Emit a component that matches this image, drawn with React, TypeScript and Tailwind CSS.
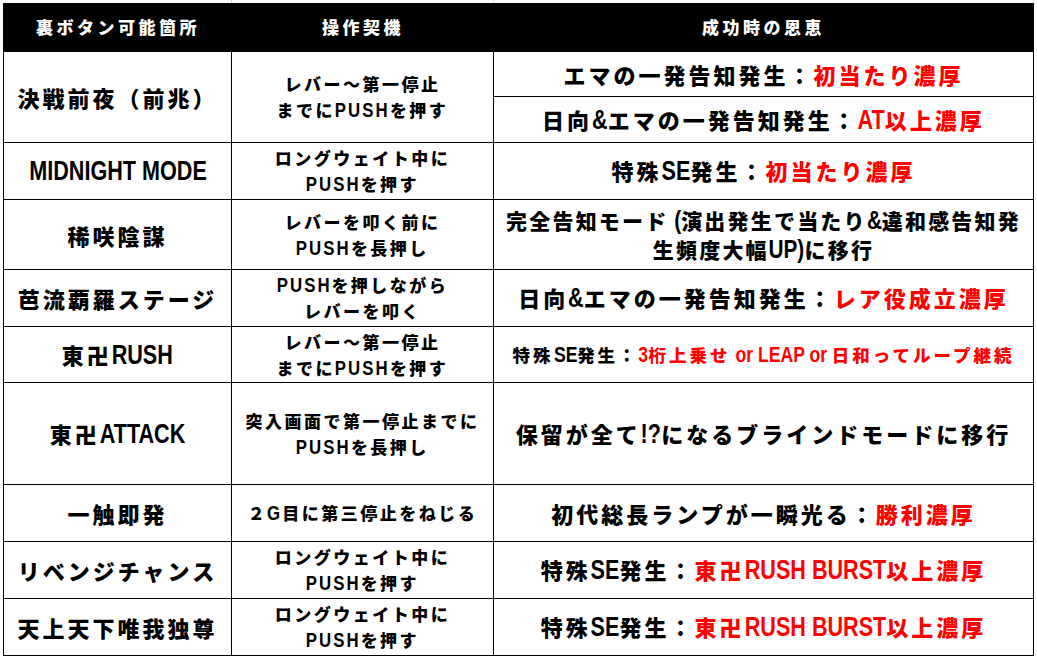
import React from "react";

function L({ children, c }: { children: React.ReactNode; c: string }) {
  return (
    <span
      className={`inline-block origin-center scale-x-[0.8] font-bold font-['Liberation_Sans','Arial',sans-serif] ${c}`}
    >
      {children}
    </span>
  );
}

function R({ children }: { children: React.ReactNode }) {
  return <span className="text-[#ff0000]">{children}</span>;
}

const cell =
  "flex flex-col items-center justify-center text-center whitespace-nowrap border-r border-b border-black text-black font-black font-['Noto_Sans_CJK_JP',sans-serif]";
const c1 = `${cell} text-[22px] tracking-[3px] leading-[28px]`;
const c2 = `${cell} text-[17px] tracking-[2.5px] leading-[26px]`;
const c3 = `${cell} text-[22px] tracking-[3px] leading-[29px]`;
const c3b = `${cell} text-[21px] tracking-[2.2px] leading-[29px]`;
const c3s = `${cell} text-[17.5px] tracking-[3px] leading-[26px]`;
const hd =
  "flex items-center justify-center bg-black text-white font-black text-[17px] tracking-[3.5px] font-['Noto_Sans_CJK_JP',sans-serif] border-b border-black";

/* column 2 latin: 21px, keeps the cell's tracking */
const PUSH = "text-[21px] -mx-[6.8px]";

export default function App() {
  return (
    <div className="w-[1037px] h-[659px] bg-white overflow-hidden">
      <div className="flex h-[3px] pl-[3px]">
        <div className="w-[229px] border-r border-[#d9d9d9]" />
        <div className="w-[262px] border-r border-[#e5e5e5]" />
        <div className="w-[540px] border-r border-[#d9d9d9]" />
      </div>
      <div className="ml-[3px] w-[1031px] grid grid-cols-[228px_262px_540px] grid-rows-[49px_45px_46px_57px_70px_57px_56px_102px_57px_57px_57px] border-l border-black">
        {/* header */}
        <div className={hd}>裏ボタン可能箇所</div>
        <div className={hd}>操作契機</div>
        <div className={`${hd} border-r`}>成功時の恩恵</div>

        {/* row 1 */}
        <div className={`${c1} row-span-2`}>決戦前夜（前兆）</div>
        <div className={`${c2} row-span-2`}>
          <div>レバー～第一停止</div>
          <div>
            までに<L c={PUSH}>PUSH</L>を押す
          </div>
        </div>
        <div className={c3}>
          <div>
            エマの一発告知発生：<R>初当たり濃厚</R>
          </div>
        </div>
        <div className={c3}>
          <div>
            日向<L c="text-[27px] tracking-normal -mx-[2px]">&amp;</L>エマの一発告知発生：
            <R>
              <L c="text-[27px] tracking-normal -mx-[3.4px]">AT</L>以上濃厚
            </R>
          </div>
        </div>

        {/* row 2 */}
        <div className={c1}>
          <L c="text-[27px] tracking-normal -mx-[22px]">MIDNIGHT MODE</L>
        </div>
        <div className={c2}>
          <div>ロングウェイト中に</div>
          <div>
            <L c={PUSH}>PUSH</L>を押す
          </div>
        </div>
        <div className={c3}>
          <div>
            特殊<L c="text-[27px] tracking-normal -mx-[3.6px]">SE</L>発生：<R>初当たり濃厚</R>
          </div>
        </div>

        {/* row 3 */}
        <div className={c1}>稀咲陰謀</div>
        <div className={c2}>
          <div>レバーを叩く前に</div>
          <div>
            <L c={PUSH}>PUSH</L>を長押し
          </div>
        </div>
        <div className={c3b}>
          <div>
            完全告知モード
            <L c="text-[26px] tracking-normal -mx-[1.6px]">{"\u00a0("}</L>
            演出発生で当たり
            <L c="text-[26px] tracking-normal -mx-[1.9px]">&amp;</L>
            違和感告知発
          </div>
          <div>
            生頻度大幅<L c="text-[26px] tracking-normal -mx-[4.5px]">UP)</L>に移行
          </div>
        </div>

        {/* row 4 */}
        <div className={c1}>芭流覇羅ステージ</div>
        <div className={c2}>
          <div>
            <L c={PUSH}>PUSH</L>を押しながら
          </div>
          <div>レバーを叩く</div>
        </div>
        <div className={c3}>
          <div>
            日向<L c="text-[27px] tracking-normal -mx-[2px]">&amp;</L>エマの一発告知発生：<R>レア役成立濃厚</R>
          </div>
        </div>

        {/* row 5 */}
        <div className={c1}>
          <div>
            東卍<L c="text-[27px] tracking-normal -mx-[7.6px]">RUSH</L>
          </div>
        </div>
        <div className={c2}>
          <div>レバー～第一停止</div>
          <div>
            までに<L c={PUSH}>PUSH</L>を押す
          </div>
        </div>
        <div className={c3s}>
          <div>
            特殊<L c="text-[22px] tracking-normal -mx-[2.9px]">SE</L>発生：
            <R>
              <L c="text-[22px] tracking-normal -mx-[1.2px]">3</L>桁上乗せ
              <L c="text-[22px] tracking-normal -mx-[12.7px]">{"\u00a0or LEAP or\u00a0"}</L>
              日和ってループ継続
            </R>
          </div>
        </div>

        {/* row 6 */}
        <div className={c1}>
          <div>
            東卍<L c="text-[27px] tracking-normal -mx-[10.8px]">ATTACK</L>
          </div>
        </div>
        <div className={c2}>
          <div>突入画面で第一停止までに</div>
          <div>
            <L c={PUSH}>PUSH</L>を長押し
          </div>
        </div>
        <div className={c3}>
          <div>
            保留が全て<L c="text-[27px] tracking-normal -mx-[2.5px]">!?</L>になるブラインドモードに移行
          </div>
        </div>

        {/* row 7 */}
        <div className={c1}>一触即発</div>
        <div className={c2}>
          <div>
            ２<L c="text-[21px] -mx-[1.9px]">G</L>目に第三停止をねじる
          </div>
        </div>
        <div className={c3}>
          <div>
            初代総長ランプが一瞬光る：<R>勝利濃厚</R>
          </div>
        </div>

        {/* row 8 */}
        <div className={c1}>リベンジチャンス</div>
        <div className={c2}>
          <div>ロングウェイト中に</div>
          <div>
            <L c={PUSH}>PUSH</L>を押す
          </div>
        </div>
        <div className={c3}>
          <div>
            特殊<L c="text-[27px] tracking-normal -mx-[3.6px]">SE</L>発生：
            <R>
              東卍<L c="text-[27px] tracking-normal -mx-[17.7px]">RUSH BURST</L>以上濃厚
            </R>
          </div>
        </div>

        {/* row 9 */}
        <div className={c1}>天上天下唯我独尊</div>
        <div className={c2}>
          <div>ロングウェイト中に</div>
          <div>
            <L c={PUSH}>PUSH</L>を押す
          </div>
        </div>
        <div className={c3}>
          <div>
            特殊<L c="text-[27px] tracking-normal -mx-[3.6px]">SE</L>発生：
            <R>
              東卍<L c="text-[27px] tracking-normal -mx-[17.7px]">RUSH BURST</L>以上濃厚
            </R>
          </div>
        </div>
      </div>
    </div>
  );
}
